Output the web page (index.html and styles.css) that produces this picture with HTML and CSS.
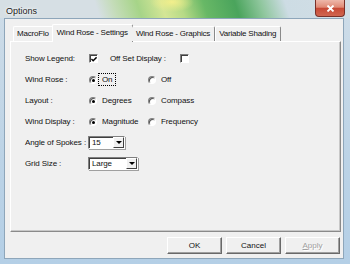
FILE: index.html
```html
<!DOCTYPE html>
<html lang="en">
<head>
    <meta charset="UTF-8">
    <title>Options</title>
    <link rel="stylesheet" href="styles.css">
</head>
<body>
    <div class="window">
        <div class="titlebar">
            <span class="title">Options</span>
            <div class="close">
                <svg width="9" height="7" viewBox="0 0 9 7"><path d="M1.5 0.5 L7.5 6.5 M7.5 0.5 L1.5 6.5" stroke="#fff" stroke-width="1.8"/></svg>
            </div>
        </div>
        <div class="client">
            <div class="tabs">
                <div class="tab first">MacroFlo</div>
                <div class="tab active">Wind Rose - Settings</div>
                <div class="tab">Wind Rose - Graphics</div>
                <div class="tab">Variable Shading</div>
            </div>
            <div class="panel">
                <div class="form">
                    <div class="row">
                        <span class="label">Show Legend:</span>
                        <span class="check checked">
                            <svg width="7" height="7" viewBox="0 0 7 7"><path d="M0.5 3 L2.5 5 L6.5 1" stroke="#000" stroke-width="1.6" fill="none"/></svg>
                        </span>
                        <span class="check-label">Off Set Display :</span>
                        <span class="check"></span>
                    </div>
                    <div class="row">
                        <span class="label">Wind Rose :</span>
                        <span class="option"><span class="radio checked"></span><span class="focus">On</span></span>
                        <span class="option"><span class="radio"></span>Off</span>
                    </div>
                    <div class="row">
                        <span class="label">Layout :</span>
                        <span class="option"><span class="radio checked"></span>Degrees</span>
                        <span class="option"><span class="radio"></span>Compass</span>
                    </div>
                    <div class="row">
                        <span class="label">Wind Display :</span>
                        <span class="option"><span class="radio checked"></span>Magnitude</span>
                        <span class="option"><span class="radio"></span>Frequency</span>
                    </div>
                    <div class="row">
                        <span class="label">Angle of Spokes :</span>
                        <span class="combo short">15<span class="drop"></span></span>
                    </div>
                    <div class="row">
                        <span class="label">Grid Size :</span>
                        <span class="combo wide">Large<span class="drop"></span></span>
                    </div>
                </div>
            </div>
            <div class="buttons">
                <button class="btn">OK</button>
                <button class="btn">Cancel</button>
                <button class="btn disabled"><u>A</u>pply</button>
            </div>
        </div>
    </div>
</body>
</html>
```

FILE: styles.css
```css
* {
    box-sizing: border-box;
}
body {
    margin: 0;
    font-family: "Liberation Sans", Arial, sans-serif;
    font-size: 8px;
    letter-spacing: -0.1px;
    color: #111;
}
.window {
    width: 350px;
    height: 264px;
    display: flex;
    flex-direction: column;
    background: linear-gradient(180deg, #cfdde8 0%, #bcd3e6 60%, #b4cfe6 100%);
    overflow: hidden;
}
.titlebar {
    height: 18px;
    display: flex;
    align-items: flex-start;
    padding-left: 6px;
    background:
        radial-gradient(ellipse 22px 10px at 172px 2px, rgba(245, 240, 140, 0.95), rgba(245, 240, 140, 0)),
        linear-gradient(72deg, #d6dfe4 0, #d6dfe4 95px, #c4dcb8 112px, #a6d488 135px, #d4e696 158px, #b6da86 176px, #68b866 198px, #4aa45c 228px, #8ec69c 252px, #cddce4 276px, #d2dee6 100%);
}
.title {
    font-size: 9px;
    letter-spacing: 0;
    line-height: 22px;
    color: #1a1a1a;
    text-shadow: 0 0 4px #fff, 0 0 2px #fff;
}
.close {
    margin-left: auto;
    margin-right: 5px;
    width: 30px;
    height: 17px;
    display: flex;
    align-items: center;
    justify-content: center;
    border: 1px solid #7a3028;
    border-top: none;
    border-radius: 0 0 4px 4px;
    background: linear-gradient(180deg, #eeb8aa 0%, #e08a76 45%, #c84a36 52%, #d06650 100%);
}
.client {
    flex: 1;
    margin: 0 6px 5px 4px;
    padding: 5px 2px 4px 5px;
    display: flex;
    flex-direction: column;
    background: #f0f0f0;
    border: 1px solid #8ea6ba;
}
.tabs {
    height: 17px;
    display: flex;
    align-items: flex-end;
    padding-left: 3px;
    position: relative;
    z-index: 1;
}
.tab {
    height: 15px;
    padding: 0 4px 0 3px;
    line-height: 14px;
    letter-spacing: -0.2px;
    white-space: nowrap;
    background: #f0f0f0;
    border: 1px solid;
    border-color: #fff #8a8a8a transparent #fff;
    border-bottom: none;
    border-radius: 2px 2px 0 0;
}
.tab.active {
    height: 18px;
    margin: 0 -1px -1px -2px;
    line-height: 15px;
    padding: 0 4px 2px 4px;
}
.tab.active + .tab {
    border-left-color: transparent;
}
.panel {
    flex: 1;
    background: #f0f0f0;
    border: 1px solid;
    border-color: #fff #8a8a8a #8a8a8a #fff;
    box-shadow: inset -1px -1px #c8c8c8;
}
.form {
    display: flex;
    flex-direction: column;
    gap: 8px;
    padding: 10px 0 0 14px;
}
.row {
    height: 13px;
    display: flex;
    align-items: center;
}
.label {
    width: 64px;
    white-space: nowrap;
}
.check {
    width: 9px;
    height: 9px;
    display: flex;
    align-items: center;
    justify-content: center;
    background: #fff;
    border: 1px solid;
    border-color: #808080 #fff #fff #808080;
    box-shadow: inset 1px 1px #404040;
}
.check svg {
    margin: 1px 0 0 1px;
}
.check-label {
    margin: 0 14px 0 12px;
    white-space: nowrap;
}
.option {
    width: 59px;
    display: flex;
    align-items: center;
    gap: 5px;
}
.radio {
    width: 8px;
    height: 8px;
    border-radius: 50%;
    border: 1px solid;
    border-color: #808080 #fff #fff #808080;
    background: #fff;
    box-shadow: inset 1px 1px 0 #505050;
    display: flex;
    align-items: center;
    justify-content: center;
}
.radio.checked::after {
    content: "";
    width: 3px;
    height: 3px;
    margin: 1px 0 0 1px;
    border-radius: 50%;
    background: #000;
}
.focus {
    outline: 1px dotted #000;
    outline-offset: 1px;
    margin-left: -2px;
    padding: 0 2px;
}
.combo {
    height: 13px;
    margin-left: -1px;
    padding-left: 3px;
    display: flex;
    align-items: center;
    background: #fff;
    border: 1px solid;
    border-color: #808080 #fff #fff #808080;
    box-shadow: inset 1px 1px #404040, 1px 1px 0 #a0a0a0;
}
.combo.short {
    width: 37px;
}
.combo.wide {
    width: 50px;
}
.drop {
    margin-left: auto;
    width: 11px;
    height: 11px;
    display: flex;
    align-items: center;
    justify-content: center;
    background: #f0f0f0;
    border: 1px solid;
    border-color: #fff #404040 #404040 #fff;
}
.drop::after {
    content: "";
    border-left: 3px solid transparent;
    border-right: 3px solid transparent;
    border-top: 3px solid #000;
}
.buttons {
    display: flex;
    justify-content: flex-end;
    gap: 4px;
    margin-top: 5px;
    padding-right: 1px;
}
.btn {
    width: 55px;
    height: 17px;
    padding: 0;
    font-family: inherit;
    font-size: 8px;
    color: #111;
    background: #f0f0f0;
    border: 1px solid;
    border-color: #fff #696969 #696969 #fff;
    box-shadow: inset -1px -1px #a0a0a0;
}
.btn.disabled {
    color: #a0a0a0;
    text-shadow: 1px 1px #fff;
}
```
